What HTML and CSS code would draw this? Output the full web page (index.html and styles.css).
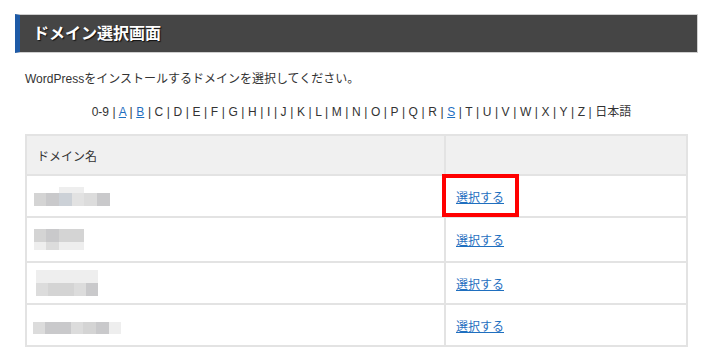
FILE: index.html
```html
<!DOCTYPE html>
<html lang="ja">
<head>
    <meta charset="UTF-8">
    <meta name="viewport" content="width=device-width, initial-scale=1.0">
    <title>ドメイン選択画面</title>
    <link rel="stylesheet" href="styles.css">
</head>
<body>
    <h2 class="page-title">ドメイン選択画面</h2>

    <div class="content">
        <p class="intro">WordPressをインストールするドメインを選択してください。</p>

        <div class="index-nav">
            0-9 | <a href="#">A</a> | <a href="#">B</a> | C | D | E | F | G | H | I | J | K | L | M | N | O | P | Q | R | <a href="#">S</a> | T | U | V | W | X | Y | Z | 日本語
        </div>

        <table class="domain-table">
            <thead>
                <tr>
                    <th class="col-name">ドメイン名</th>
                    <th class="col-action"></th>
                </tr>
            </thead>
            <tbody>
                <tr class="row-1">
                    <td>
                        <!-- domain names are pixelated in the original -->
                        <div class="blur blur-1">
                            <span class="w12 c0"></span><span class="w13 c0"></span><span class="w13 c5"></span><span class="w12 c5"></span><span class="w13 c0"></span><span class="w13 c0"></span>
                            <span class="w12 c2"></span><span class="w13 c3"></span><span class="w13 c4"></span><span class="w12 c6"></span><span class="w13 c1"></span><span class="w13 c3"></span>
                        </div>
                    </td>
                    <td class="action">
                        <a href="#">選択する</a>
                        <span class="highlight"></span>
                    </td>
                </tr>
                <tr class="row-2">
                    <td>
                        <div class="blur blur-2">
                            <span class="w12 c2"></span><span class="w13 c3"></span><span class="w13 c2"></span><span class="w12 c2"></span>
                            <span class="w12 c5"></span><span class="w13 c1"></span><span class="w13 c5"></span><span class="w12 c5"></span>
                        </div>
                    </td>
                    <td class="action"><a href="#">選択する</a></td>
                </tr>
                <tr class="row-3">
                    <td>
                        <div class="blur blur-3">
                            <span class="w12 c5"></span><span class="w13 c5"></span><span class="w13 c5"></span><span class="w12 c5"></span><span class="w12 c5"></span>
                            <span class="w12 c1"></span><span class="w13 c2"></span><span class="w13 c2"></span><span class="w12 c1"></span><span class="w12 c3"></span>
                        </div>
                    </td>
                    <td class="action"><a href="#">選択する</a></td>
                </tr>
                <tr class="row-4">
                    <td>
                        <div class="blur blur-4">
                            <span class="w12 c0"></span><span class="w13 c0"></span><span class="w13 c0"></span><span class="w12 c0"></span><span class="w13 c0"></span><span class="w13 c0"></span><span class="w12 c0"></span>
                            <span class="w12 c1"></span><span class="w13 c3"></span><span class="w13 c3"></span><span class="w12 c1"></span><span class="w13 c2"></span><span class="w13 c3"></span><span class="w12 c5"></span>
                        </div>
                    </td>
                    <td class="action"><a href="#">選択する</a></td>
                </tr>
            </tbody>
        </table>
    </div>
</body>
</html>
```

FILE: styles.css
```css
body {
    margin: 0;
    padding: 14px 12px 0 15px;
    font-family: "Liberation Sans", "Noto Sans CJK JP", sans-serif;
    font-size: 12px;
    color: #333;
    background-color: #fff;
}
a {
    color: #1f6fbf;
    text-decoration: underline;
}
.page-title {
    margin: 0;
    height: 39px;
    box-sizing: border-box;
    padding-left: 13px;
    border: 1px solid #cfcfcf;
    border-left: 5px solid #1e5aa6;
    background-color: #454545;
    color: #fff;
    font-size: 16px;
    font-weight: bold;
    line-height: 37px;
    text-shadow: 1px 1px 1px #111;
}
.content {
    padding: 0 10px;
}
.intro {
    margin: 18px 0 0;
    line-height: 17px;
}
.index-nav {
    margin-top: 16px;
    text-align: center;
    line-height: 17px;
    padding-left: 10px;
    word-spacing: 0.25px;
}
.domain-table {
    margin-top: 13px;
    width: 100%;
    border-collapse: collapse;
    border: 2px solid #e3e3e3;
}
.domain-table th,
.domain-table td {
    border: 2px solid #e3e3e3;
    padding: 0 10px;
    text-align: left;
    vertical-align: middle;
}
.domain-table th {
    background-color: #f0f0f0;
    font-weight: normal;
    height: 38px;
}
.col-name {
    width: 397px;
}
.row-1 td,
.row-3 td,
.row-4 td {
    height: 40px;
}
.row-2 td {
    height: 43px;
}
.action {
    position: relative;
}
.highlight {
    position: absolute;
    left: -4px;
    top: -2px;
    width: 77px;
    height: 43px;
    box-sizing: border-box;
    border: 4px solid #f00;
}
.blur {
    display: grid;
    margin-left: -3px;
}
.blur span {
    display: block;
}
.blur-1 {
    grid-template-columns: 12px 13px 13px 12px 13px 13px;
    grid-template-rows: 6px 13px;
}
.blur-2 {
    grid-template-columns: 12px 13px 13px 12px;
    grid-template-rows: 13px 8px;
}
.blur-3 {
    grid-template-columns: 12px 13px 13px 12px 12px;
    grid-template-rows: 13px 13px;
    margin-left: -1px;
}
.blur-4 {
    grid-template-columns: 12px 13px 13px 12px 13px 13px 12px;
    grid-template-rows: 6px 12px;
    margin-left: -4px;
}
.c0 { background-color: #fff; }
.c1 { background-color: #dcdcdc; }
.c2 { background-color: #d4d4d4; }
.c3 { background-color: #c9c9cb; }
.c4 { background-color: #ccd1d7; }
.c5 { background-color: #eeeeee; }
.c6 { background-color: #e2e2e2; }
```
